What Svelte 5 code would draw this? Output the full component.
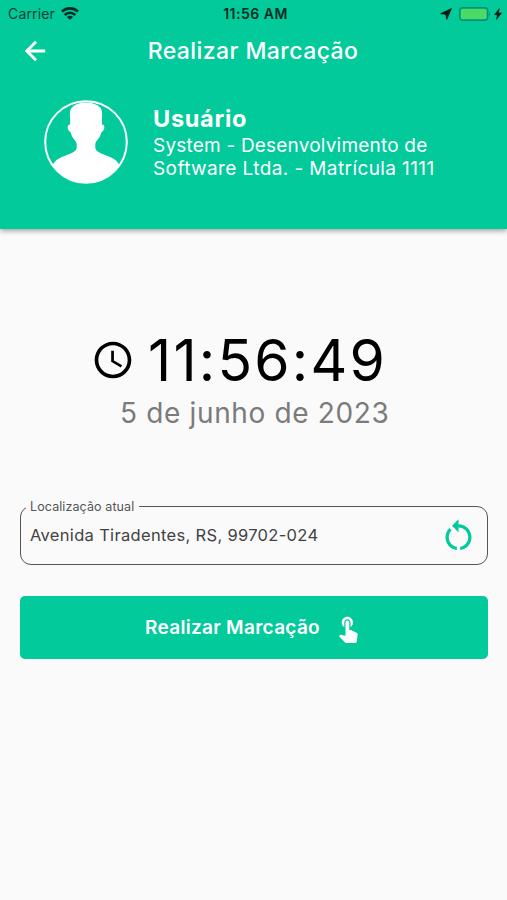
<script lang="ts">
  let time = $state('11:56:49');
  let date = $state('5 de junho de 2023');
  let address = $state('Avenida Tiradentes, RS, 99702-024');
</script>

<div class="screen">
  <header>
    <div class="status">
      <div class="carrier">
        <span>Carrier</span>
        <svg width="18" height="13" viewBox="0 0 18 13" fill="none" stroke="#042b23" stroke-width="2.7">
          <path d="M1 4.5C5.6.4 12.4.4 17 4.5" />
          <path d="M3.7 7.9C6.9 5 11.1 5 14.3 7.9" />
          <path d="M9 12.7 5.9 9.9C7.8 8.3 10.2 8.3 12.1 9.9Z" fill="#042b23" stroke="none" />
        </svg>
      </div>
      <span class="hour">11:56 AM</span>
      <div class="power">
        <svg width="12" height="12" viewBox="0 0 12 12" fill="#001a14" stroke="#001a14" stroke-width=".8" stroke-linejoin="round">
          <path d="M11.4.6.6 5.7 5.8 6.2 6.8 11.3Z" />
        </svg>
        <svg class="battery" width="32" height="14" viewBox="0 0 32 14">
          <rect x=".7" y=".7" width="28" height="12.6" rx="3" fill="none" stroke="#078c70" stroke-width="1.4" />
          <rect x="2" y="2" width="25.4" height="10" rx="1.5" fill="#4cd964" />
          <path d="M30 4.8q2.2 2.2 0 4.4z" fill="#078c70" />
        </svg>
        <svg width="8" height="12" viewBox="0 0 8 12" fill="#001a14" stroke="#001a14" stroke-width=".5">
          <path d="M5.3.5.5 6.7H3.4L2.5 11.5 7.5 4.9H4.5Z" />
        </svg>
      </div>
    </div>

    <div class="toolbar">
      <button class="back" aria-label="Voltar">
        <svg width="30" height="30" viewBox="0 0 24 24" fill="#fff" stroke="#fff" stroke-width=".4" stroke-linejoin="round">
          <path d="M20 11H7.83l5.59-5.59L12 4l-8 8 8 8 1.41-1.41L7.83 13H20v-2z" />
        </svg>
      </button>
      <h1>Realizar Marcação</h1>
    </div>

    <div class="profile">
      <svg width="84" height="84" viewBox="0 0 84 84">
        <defs>
          <clipPath id="avatar"><circle cx="42" cy="42" r="41" /></clipPath>
        </defs>
        <path
          clip-path="url(#avatar)"
          fill="#fff"
          d="M42 2.5C48 2.5 52.5 4 55.5 7C58.5 9 58.3 14 57.9 18V24.5C61.3 24.5 60.8 30 58.3 31.5C57.5 32 57 33 56.5 35C55.5 38.5 51.5 41 51.3 44V48C52 53 62 54.5 69 58.5C74 61.2 77 66 77 72V84H7V72C7 66 10 61.2 15 58.5C22 54.5 32 53 32.7 48V44C32.5 41 28.5 38.5 27.5 35C27 33 26.5 32 25.7 31.5C23.2 30 22.7 24.5 26.1 24.5V18C25.7 14 25.5 9 28.5 7C31.5 4 36 2.5 42 2.5Z"
        />
        <circle cx="42" cy="42" r="40.8" fill="none" stroke="#fff" stroke-width="2" />
      </svg>
      <div class="info">
        <strong>Usuário</strong>
        <span class="line1">System - Desenvolvimento de</span>
        <span class="line2">Software Ltda. - Matrícula 1111</span>
      </div>
    </div>
  </header>

  <main>
    <div class="clock">
      <svg width="44" height="44" viewBox="0 0 24 24" fill="#000">
        <path d="M11.99 2C6.47 2 2 6.48 2 12s4.47 10 9.99 10C17.52 22 22 17.52 22 12S17.52 2 11.99 2zM12 20c-4.42 0-8-3.58-8-8s3.58-8 8-8 8 3.58 8 8-3.58 8-8 8zm.5-13H11v6l5.25 3.15.75-1.23-4.5-2.67z" />
      </svg>
      <span class="time">{time}</span>
    </div>
    <div class="date">{date}</div>

    <fieldset>
      <legend>Localização atual</legend>
      <div class="field">
        <span>{address}</span>
        <button class="refresh" aria-label="Atualizar">
          <svg width="39" height="39" viewBox="0 0 24 24" fill="#02ca9b">
            <path d="M12 5V2L8 6l4 4V7c3.31 0 6 2.69 6 6 0 2.97-2.17 5.43-5 5.91v2.02c3.95-.49 7-3.85 7-7.93 0-4.42-3.58-8-8-8zm-6 8c0-1.65.67-3.15 1.76-4.24L6.34 7.34C4.9 8.79 4 10.79 4 13c0 4.08 3.05 7.44 7 7.93v-2.02c-2.83-.48-5-2.94-5-5.91z" />
          </svg>
        </button>
      </div>
    </fieldset>

    <button class="submit">
      <span>Realizar Marcação</span>
      <svg width="30" height="30" viewBox="0 0 24 24" fill="#fff">
        <path d="M9 11.24V7.5C9 6.12 10.12 5 11.5 5S14 6.12 14 7.5v3.74c1.21-.81 2-2.18 2-3.74C16 5.01 13.99 3 11.5 3S7 5.01 7 7.5c0 1.56.79 2.93 2 3.74zm9.84 4.63l-4.54-2.26c-.17-.07-.35-.11-.54-.11H13v-6c0-.83-.67-1.5-1.5-1.5S10 6.67 10 7.5v10.74l-3.43-.72c-.08-.01-.15-.03-.24-.03-.31 0-.59.13-.79.33l-.79.8 4.94 4.94c.27.27.65.44 1.06.44h6.79c.75 0 1.33-.55 1.44-1.28l.75-5.27c.01-.07.02-.14.02-.2 0-.62-.38-1.16-.91-1.38z" />
      </svg>
    </button>
  </main>
</div>

<style>
  :global(body) {
    background: #fafafa;
  }

  .screen {
    height: 900px;
    overflow: hidden;
    font-family: Inter, sans-serif;
    background: #fafafa;
  }

  svg {
    display: block;
    flex: none;
  }

  button {
    padding: 0;
    border: 0;
    background: none;
    font-family: inherit;
    cursor: pointer;
  }

  header {
    box-sizing: border-box;
    height: 229px;
    background: #02ca9b;
    box-shadow: 0 2px 5px rgba(0, 0, 0, 0.35);
    color: #fff;
  }

  .status {
    display: grid;
    grid-template-columns: 1fr auto 1fr;
    align-items: center;
    height: 27px;
    padding: 0 5px 0 8px;
    color: #063e32;
    font-size: 14px;
  }

  .carrier {
    display: flex;
    align-items: center;
    gap: 6px;
    letter-spacing: 0.15px;
  }

  .hour {
    padding-left: 1px;
    font-weight: 600;
    letter-spacing: 0.5px;
    color: #032b23;
  }

  .power {
    display: flex;
    align-items: center;
    justify-content: flex-end;
    gap: 3px;
  }

  .power .battery {
    margin-left: 4px;
  }

  .toolbar {
    display: grid;
    grid-template-columns: 30px 1fr 30px;
    align-items: center;
    height: 48px;
    padding: 0 21px 0 20px;
  }

  h1 {
    margin: 0;
    text-align: center;
    font-size: 23px;
    font-weight: 500;
    line-height: 28px;
    letter-spacing: 0.43px;
  }

  .profile {
    display: flex;
    gap: 25px;
    padding: 25px 0 0 44px;
  }

  .info {
    display: flex;
    flex-direction: column;
    padding-top: 4px;
    font-size: 19px;
    line-height: 23px;
    white-space: nowrap;
  }

  .info strong {
    font-size: 23.5px;
    line-height: 30px;
    letter-spacing: 0.7px;
  }

  .line1 {
    letter-spacing: 0.2px;
  }

  .line2 {
    letter-spacing: 0.4px;
  }

  main {
    display: flex;
    flex-direction: column;
    padding: 102px 19px 0 20px;
  }

  .clock {
    display: flex;
    align-items: center;
    gap: 13px;
    height: 58px;
    padding-left: 71px;
  }

  .time {
    font-size: 57px;
    line-height: 58px;
    letter-spacing: 2.2px;
    padding-top: 2px;
    color: #000;
  }

  .date {
    padding-left: 100px;
    font-size: 28px;
    line-height: 34px;
    letter-spacing: 0.65px;
    color: #7b7b7b;
    margin-top: 7px;
  }

  fieldset {
    box-sizing: border-box;
    height: 67px;
    margin: 68px 0 0;
    padding: 0;
    min-width: 0;
    border: 1.5px solid #555;
    border-radius: 11px;
  }

  legend {
    margin-left: 5px;
    padding: 0 5px 0 4px;
    font-size: 12.5px;
    line-height: 17px;
    letter-spacing: 0.1px;
    color: #555;
  }

  .field {
    display: flex;
    align-items: center;
    justify-content: space-between;
    height: 41px;
    padding: 0 9px;
    font-size: 16.5px;
    letter-spacing: 0.32px;
    color: #424242;
  }

  .field span {
    padding-bottom: 2px;
  }

  .submit {
    display: flex;
    align-items: center;
    justify-content: center;
    gap: 13px;
    height: 63px;
    margin-top: 31px;
    border-radius: 5px;
    background: #02ca9b;
    color: #fff;
    font-size: 19px;
    font-weight: 600;
    letter-spacing: 0.3px;
  }
</style>
